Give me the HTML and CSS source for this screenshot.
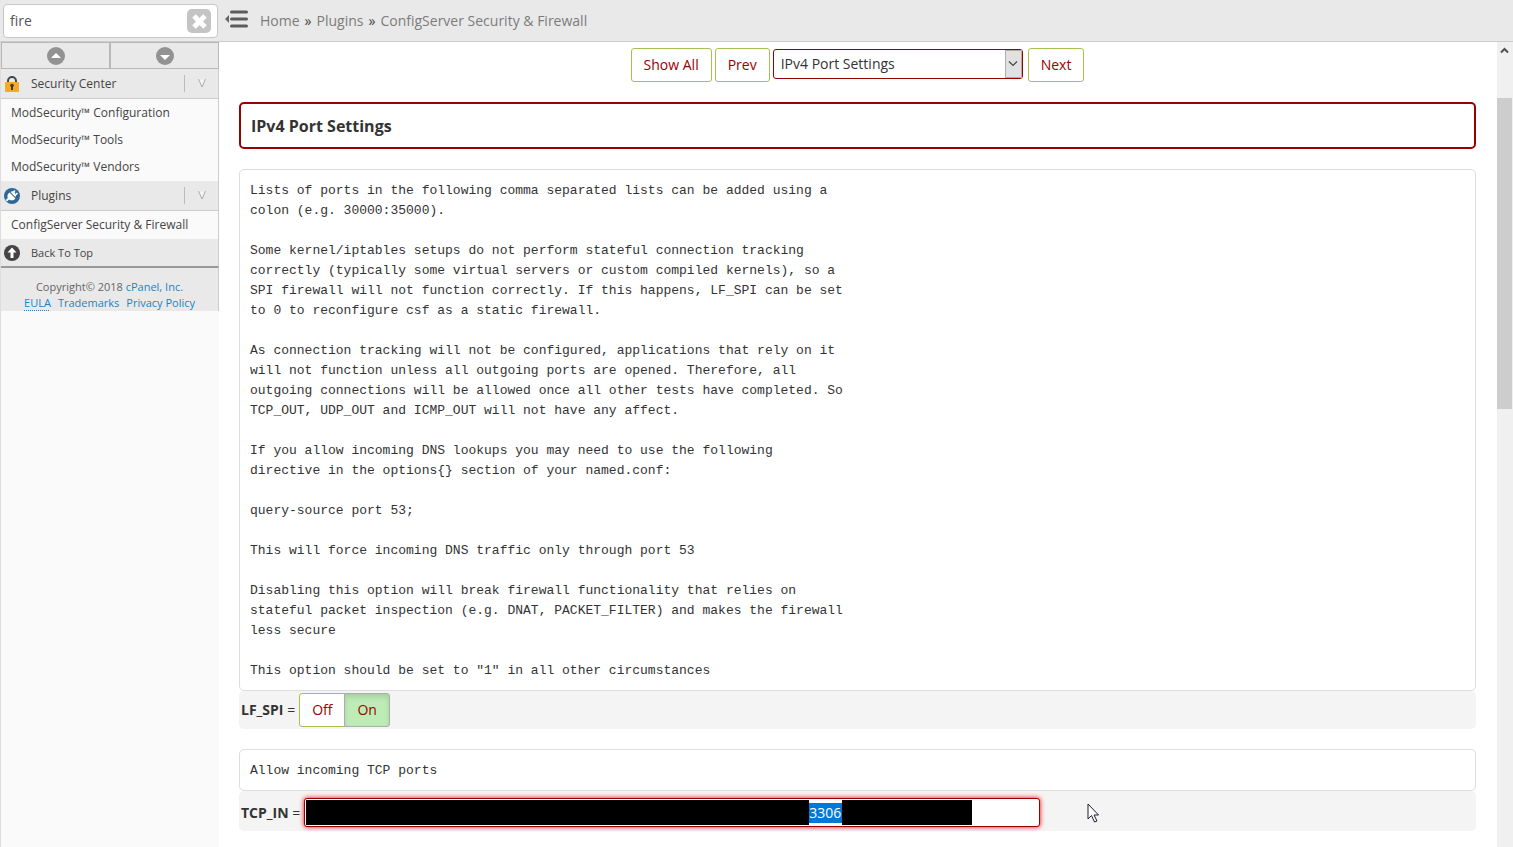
FILE: index.html
```
<!DOCTYPE html>
<html lang="en">
<head>
  <meta charset="UTF-8" />
  <meta name="viewport" content="width=device-width, initial-scale=1.0"/>
  <title>ConfigServer Security &amp; Firewall</title>
  <link rel="stylesheet" href="styles.css">
</head>
<body>
  <header class="topbar">
    <div class="search">
      <input type="text" class="search-input" value="fire" aria-label="Search" />
      <button type="button" class="search-clear" aria-label="Clear search">
        <svg width="24" height="24" viewBox="0 0 24 24"><rect width="24" height="24" rx="5" fill="#c4c4c4"/><path d="M7 7l11 11M18 7L7 18" stroke="#fff" stroke-width="5"/></svg>
      </button>
    </div>
    <button type="button" class="menu-toggle" aria-label="Toggle menu">
      <svg width="24" height="18" viewBox="0 0 24 18"><path d="M4 5v8L0 9z" fill="#666"/><path d="M6.500 2h15M6.500 9h15M6.500 16h15" stroke="#5c5c5c" stroke-width="3" stroke-linecap="round"/></svg>
    </button>
    <nav class="breadcrumb">
      <a href="#">Home</a><span>»</span><a href="#">Plugins</a><span>»</span><a href="#">ConfigServer Security &amp; Firewall</a>
    </nav>
  </header>

  <div class="layout">
    <aside class="sidebar">
      <div class="expand-buttons">
        <button type="button" aria-label="Collapse all">
          <svg width="18" height="18" viewBox="0 0 18 18"><circle cx="9" cy="9" r="9" fill="#929292"/><path d="M9 6l5 5H4z" fill="#fff"/></svg>
        </button>
        <button type="button" aria-label="Expand all">
          <svg width="18" height="18" viewBox="0 0 18 18"><circle cx="9" cy="9" r="9" fill="#929292"/><path d="M4 8h10l-5 5z" fill="#fff"/></svg>
        </button>
      </div>

      <div class="group-title">
        <svg width="16" height="16" viewBox="0 0 16 16"><path d="M4 7V5a4 4 0 0 1 8 0v2" fill="none" stroke="#3f464c" stroke-width="2"/><rect x="1" y="6" width="14" height="10" rx="1" fill="#f6a828"/><circle cx="8" cy="9.500" r="1.800" fill="#4a3820"/><path d="M7 10h2v4H7z" fill="#4a3820"/></svg>
        <a href="#">Security Center</a>
        <button type="button" class="group-arrow" aria-label="Toggle Security Center">
          <svg width="8" height="9" viewBox="0 0 8 9"><path d="M0.500 0.500h7L4 8z" fill="#f5f5f5"/><path d="M0.500 0l3.500 8 3.500-8" fill="none" stroke="#aaa"/></svg>
        </button>
      </div>
      <ul class="group-list">
        <li><a href="#">ModSecurity™ Configuration</a></li>
        <li><a href="#">ModSecurity™ Tools</a></li>
        <li><a href="#">ModSecurity™ Vendors</a></li>
      </ul>

      <div class="group-title">
        <svg width="16" height="16" viewBox="0 0 16 16"><circle cx="8" cy="8" r="8" fill="#2f6798"/><path d="M5.500 4.500l6 6c-1.500 2-4.500 2.500-6.500 1L3 13.500 1.500 12l2.300-2C3 8 3.500 6 5.500 4.500z" fill="#fff"/><path d="M6.500 4c1.500-1 3-.8 4 .2s1.500 3 1 5z" fill="#fff"/><path d="M8.500 5l2.500-2.500M11 7.500L13.500 5" stroke="#fff" stroke-width="1.500"/></svg>
        <a href="#">Plugins</a>
        <button type="button" class="group-arrow" aria-label="Toggle Plugins">
          <svg width="8" height="9" viewBox="0 0 8 9"><path d="M0.500 0.500h7L4 8z" fill="#f5f5f5"/><path d="M0.500 0l3.500 8 3.500-8" fill="none" stroke="#aaa"/></svg>
        </button>
      </div>
      <ul class="group-list">
        <li><a href="#">ConfigServer Security &amp; Firewall</a></li>
      </ul>

      <div class="back-to-top">
        <svg width="16" height="16" viewBox="0 0 16 16"><circle cx="8" cy="8" r="8" fill="#444"/><path d="M8 2.500l4.500 5H9.500V13h-3V7.500h-3z" fill="#fff"/></svg>
        <a href="#">Back To Top</a>
      </div>

      <footer class="copyright">
        <div>Copyright© 2018 <a href="#">cPanel, Inc.</a></div>
        <div class="legal"><a href="#" class="eula">EULA</a><a href="#">Trademarks</a><a href="#">Privacy Policy</a></div>
      </footer>
    </aside>

    <main class="content">
      <div class="pager">
        <button type="button" class="btn">Show All</button>
        <button type="button" class="btn">Prev</button>
        <div class="select-wrap">
          <select aria-label="Section">
            <option>IPv4 Port Settings</option>
          </select>
          <span class="select-arrow"><svg width="10" height="6" viewBox="0 0 10 6"><path d="M1 0.500l4 4 4-4" fill="none" stroke="#444" stroke-width="1.200"/></svg></span>
        </div>
        <button type="button" class="btn">Next</button>
      </div>

      <h1 class="section-title">IPv4 Port Settings</h1>

      <pre class="comment">Lists of ports in the following comma separated lists can be added using a
colon (e.g. 30000:35000).

Some kernel/iptables setups do not perform stateful connection tracking
correctly (typically some virtual servers or custom compiled kernels), so a
SPI firewall will not function correctly. If this happens, LF_SPI can be set
to 0 to reconfigure csf as a static firewall.

As connection tracking will not be configured, applications that rely on it
will not function unless all outgoing ports are opened. Therefore, all
outgoing connections will be allowed once all other tests have completed. So
TCP_OUT, UDP_OUT and ICMP_OUT will not have any affect.

If you allow incoming DNS lookups you may need to use the following
directive in the options{} section of your named.conf:

query-source port 53;

This will force incoming DNS traffic only through port 53

Disabling this option will break firewall functionality that relies on
stateful packet inspection (e.g. DNAT, PACKET_FILTER) and makes the firewall
less secure

This option should be set to "1" in all other circumstances</pre>
      <div class="setting">
        <span class="setting-name"><b>LF_SPI</b> =</span>
        <div class="switch">
          <input type="radio" name="lf_spi" id="lf_spi_off" /><label for="lf_spi_off">Off</label>
          <input type="radio" name="lf_spi" id="lf_spi_on" checked /><label for="lf_spi_on">On</label>
        </div>
      </div>

      <pre class="comment">Allow incoming TCP ports</pre>
      <div class="setting setting-text">
        <label class="setting-name" for="tcp_in"><b>TCP_IN</b> =</label>
        <div class="port-field">
          <span class="masked masked-before"></span>
          <input type="text" id="tcp_in" value="3306" />
          <span class="masked masked-after"></span>
        </div>
        <svg class="pointer" width="13" height="20" viewBox="0 0 13 20"><path d="M1 1v15l3.500-3.500L7.500 19l2.500-1-3-6h4.500z" fill="#fff" stroke="#1d1d2b"/></svg>
      </div>
    </main>

    <div class="scrollbar">
      <svg width="9" height="7" viewBox="0 0 9 7"><path d="M1 5.500l3.500-3.500L8 5.500" fill="none" stroke="#505050" stroke-width="2"/></svg>
      <div class="scroll-thumb"></div>
    </div>
  </div>
</body>
</html>
```
FILE: styles.css
```
* {
  margin: 0;
  padding: 0;
  box-sizing: border-box;
}

body {
  display: flex;
  flex-direction: column;
  height: 100vh;
  overflow: hidden;
  font-family: 'Open Sans', sans-serif;
  font-size: 14px;
  line-height: 20px;
  color: #333;
  background-color: #fff;
}

button,
input,
select {
  font-family: inherit;
  font-size: 14px;
}

button {
  cursor: pointer;
}

svg {
  display: block;
}

a {
  color: inherit;
  text-decoration: none;
}

/* Top bar */
.topbar {
  display: flex;
  align-items: center;
  height: 42px;
  padding-left: 3px;
  background-color: #e9e9e9;
  border-bottom: 1px solid #ccc;
}

.search {
  display: flex;
  align-items: center;
  width: 215px;
  height: 34px;
  padding: 0 6px;
  background-color: #fff;
  border: 1px solid #c8c8c8;
  border-radius: 4px;
}

.search-input {
  flex: 1;
  min-width: 0;
  color: #555;
  border: none;
  outline: none;
}

.search-clear,
.menu-toggle {
  background: none;
  border: none;
}

.menu-toggle {
  margin: 0 10px 4px 7px;
}

.breadcrumb {
  display: flex;
  gap: 5px;
  padding-left: 1px;
  color: #7c7c7c;
}

.breadcrumb span {
  color: #444;
}

.layout {
  display: flex;
  flex: 1;
  min-height: 0;
}

/* Sidebar */
.sidebar {
  width: 219px;
  font-size: 12px;
  color: #444;
  background-color: #fafafa;
  border-left: 1px solid #ddd;
}

.expand-buttons {
  display: flex;
  height: 27px;
}

.expand-buttons button {
  display: flex;
  flex: 1;
  align-items: center;
  justify-content: center;
  background-color: #e9e9e9;
  border: 1px solid #b8b8b8;
}

.group-title,
.back-to-top {
  display: flex;
  align-items: center;
  gap: 11px;
  height: 30px;
  padding-left: 3px;
  background-color: #e9e9e9;
  border-right: 1px solid #ccc;
  border-bottom: 1px solid #ccc;
}

.group-arrow {
  display: flex;
  justify-content: center;
  width: 34px;
  margin-left: auto;
  padding: 4px 0;
  background: none;
  border: none;
  border-left: 1px solid #bbb;
}

.group-list {
  padding-bottom: 1px;
  list-style: none;
  border-right: 1px solid #ccc;
}

.group-list li {
  padding-left: 10px;
  line-height: 27px;
}

.back-to-top {
  height: 29px;
  font-size: 11px;
  border-bottom: 2px solid #999;
}

.copyright {
  padding-top: 11px;
  font-size: 11px;
  line-height: 16px;
  color: #666;
  text-align: center;
  background-color: #e9e9e9;
  border-right: 1px solid #ccc;
}

.copyright a {
  color: #1a83c6;
}

.legal {
  display: flex;
  justify-content: center;
  gap: 7px;
}

.copyright .eula {
  text-decoration: underline dotted;
  text-underline-offset: 3px;
}

/* Content */
.content {
  flex: 1;
  min-width: 0;
  padding: 6px 21px 0 20px;
  overflow: hidden;
}

.pager {
  display: flex;
  justify-content: center;
  gap: 3px;
  margin-bottom: 20px;
}

.btn {
  height: 34px;
  padding: 0 12px 2px;
  color: #900;
  background-color: #fff;
  border: 1px solid #a6c150;
  border-radius: 3px;
}

.select-wrap {
  position: relative;
  width: 250px;
  height: 30px;
  margin: 1px 2px 0 0;
}

.select-wrap select {
  width: 100%;
  height: 100%;
  padding: 0 7px 2px;
  color: #333;
  background-color: #fff;
  border: 1px solid #900;
  border-radius: 3px;
  appearance: none;
}

.select-arrow {
  position: absolute;
  top: 1px;
  right: 1px;
  bottom: 1px;
  display: flex;
  align-items: center;
  justify-content: center;
  width: 17px;
  background-color: #e1e1e1;
  border: 1px solid #adadad;
  pointer-events: none;
}

.section-title {
  margin-bottom: 20px;
  padding: 11px 10px 9px;
  font-size: 16px;
  line-height: 23px;
  border: 2px solid #900;
  border-radius: 5px;
}

.comment {
  padding: 11px 10px 9px;
  font-family: 'Liberation Mono', monospace;
  font-size: 13px;
  line-height: 20px;
  border: 1px solid #ddd;
  border-radius: 5px;
}

.setting {
  display: flex;
  align-items: center;
  gap: 4px;
  margin-bottom: 20px;
  padding: 2px;
  background-color: #f4f4f4;
  border-radius: 5px;
}

.switch {
  display: flex;
}

.switch input {
  position: absolute;
  opacity: 0;
}

.switch label {
  padding: 6px 12px;
  color: #900;
  background-color: #fff;
  border: 1px solid #a6c150;
  border-radius: 3px 0 0 3px;
  cursor: pointer;
}

.switch input + label + input + label {
  margin-left: -1px;
  border-radius: 0 3px 3px 0;
}

.switch input:checked + label {
  background-color: #bdecb6;
  border-color: #adadad;
  box-shadow: inset 0 3px 5px rgba(0, 0, 0, 0.125);
}

.setting-text {
  position: relative;
  padding: 7px 2px 4px;
}

.port-field {
  display: flex;
  align-items: center;
  width: 736px;
  height: 29px;
  padding: 0 1px;
  background-color: #fff;
  border: 1px solid #900;
  border-radius: 3px;
  box-shadow: 0 0 5px #e00;
}

.port-field input {
  width: 33px;
  height: 20px;
  color: #fff;
  background-color: #0078d7;
  border: none;
  outline: none;
}

/* Hidden port numbers */
.masked {
  height: 25px;
  background-color: #000;
}

.masked-before {
  width: 503px;
}

.masked-after {
  width: 130px;
}

/* Mouse pointer over the row */
.pointer {
  position: absolute;
  top: 12px;
  left: 848px;
}

/* Scrollbar */
.scrollbar {
  display: flex;
  flex-direction: column;
  align-items: center;
  width: 16px;
  padding: 5px 1px 0 0;
  background-color: #f0f0f0;
}

.scroll-thumb {
  width: 15px;
  height: 311px;
  margin-top: 44px;
  background-color: #cdcdcd;
}
```
